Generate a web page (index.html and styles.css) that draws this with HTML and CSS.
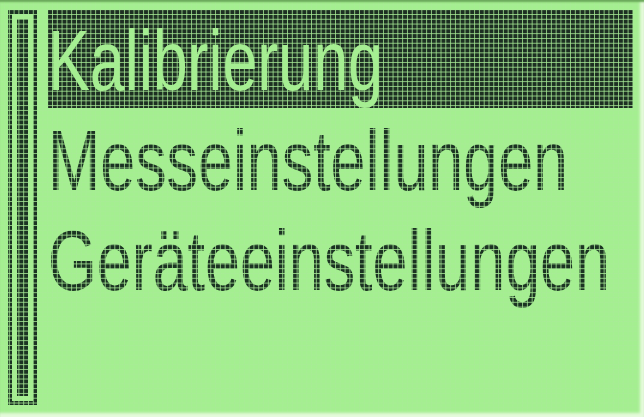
FILE: index.html
```html
<!DOCTYPE html>
<html lang="de">
<head>
<meta charset="utf-8">
<title>Menü</title>
<link rel="stylesheet" href="styles.css">
</head>
<body>
<div class="screen">
  <div class="scroll"><div class="thumb"></div></div>
  <ul class="menu">
    <li class="item selected"><span class="label">Kalibrierung</span></li>
    <li class="item"><span class="label">Messeinstellungen</span></li>
    <li class="item"><span class="label">Geräteeinstellungen</span></li>
  </ul>
  <div class="grid"></div>
</div>
</body>
</html>
```

FILE: styles.css
```css
html, body {
  margin: 0;
  padding: 0;
  background: #a4ef90;
}

.screen {
  position: relative;
  width: 644px;
  height: 417px;
  box-sizing: border-box;
  padding: 10px 0 0 8px;
  display: flex;
  align-items: flex-start;
  gap: 11px;
  background: #a4ef90;
  overflow: hidden;
}

.scroll {
  width: 29px;
  height: 395px;
  box-sizing: border-box;
  border: 4.8px solid #1b3322;
  padding: 4.8px;
  flex: none;
}

.thumb {
  height: 100%;
  background: #1b3322;
}

.menu {
  list-style: none;
  margin: 0;
  padding: 0;
  width: 585px;
  display: flex;
  flex-direction: column;
  gap: 2px;
}

.item {
  height: 98px;
  font-family: "Liberation Sans", Arial, sans-serif;
  font-size: 86px;
  line-height: 100px;
  color: #1b3322;
  white-space: nowrap;
}

.label {
  display: inline-block;
  transform: scaleX(0.73);
  transform-origin: left center;
}

.selected {
  background: #1d2f22;
  color: #a4ef90;
  overflow: hidden;
}

.grid {
  position: absolute;
  inset: 0;
  pointer-events: none;
  background-image:
    linear-gradient(to right, rgba(168, 236, 150, 0.8) 1.3px, transparent 1.3px),
    linear-gradient(to bottom, rgba(168, 236, 150, 0.8) 1.3px, transparent 1.3px);
  background-size: 4.8px 4.8px;
  background-position: 47.2px 9.2px;
  box-shadow:
    inset 0 3px 2px -1px #6aa85a,
    inset -6px 0 3px -2px #e6fadc,
    inset 0 -6px 3px -2px #e6fadc;
}
```
